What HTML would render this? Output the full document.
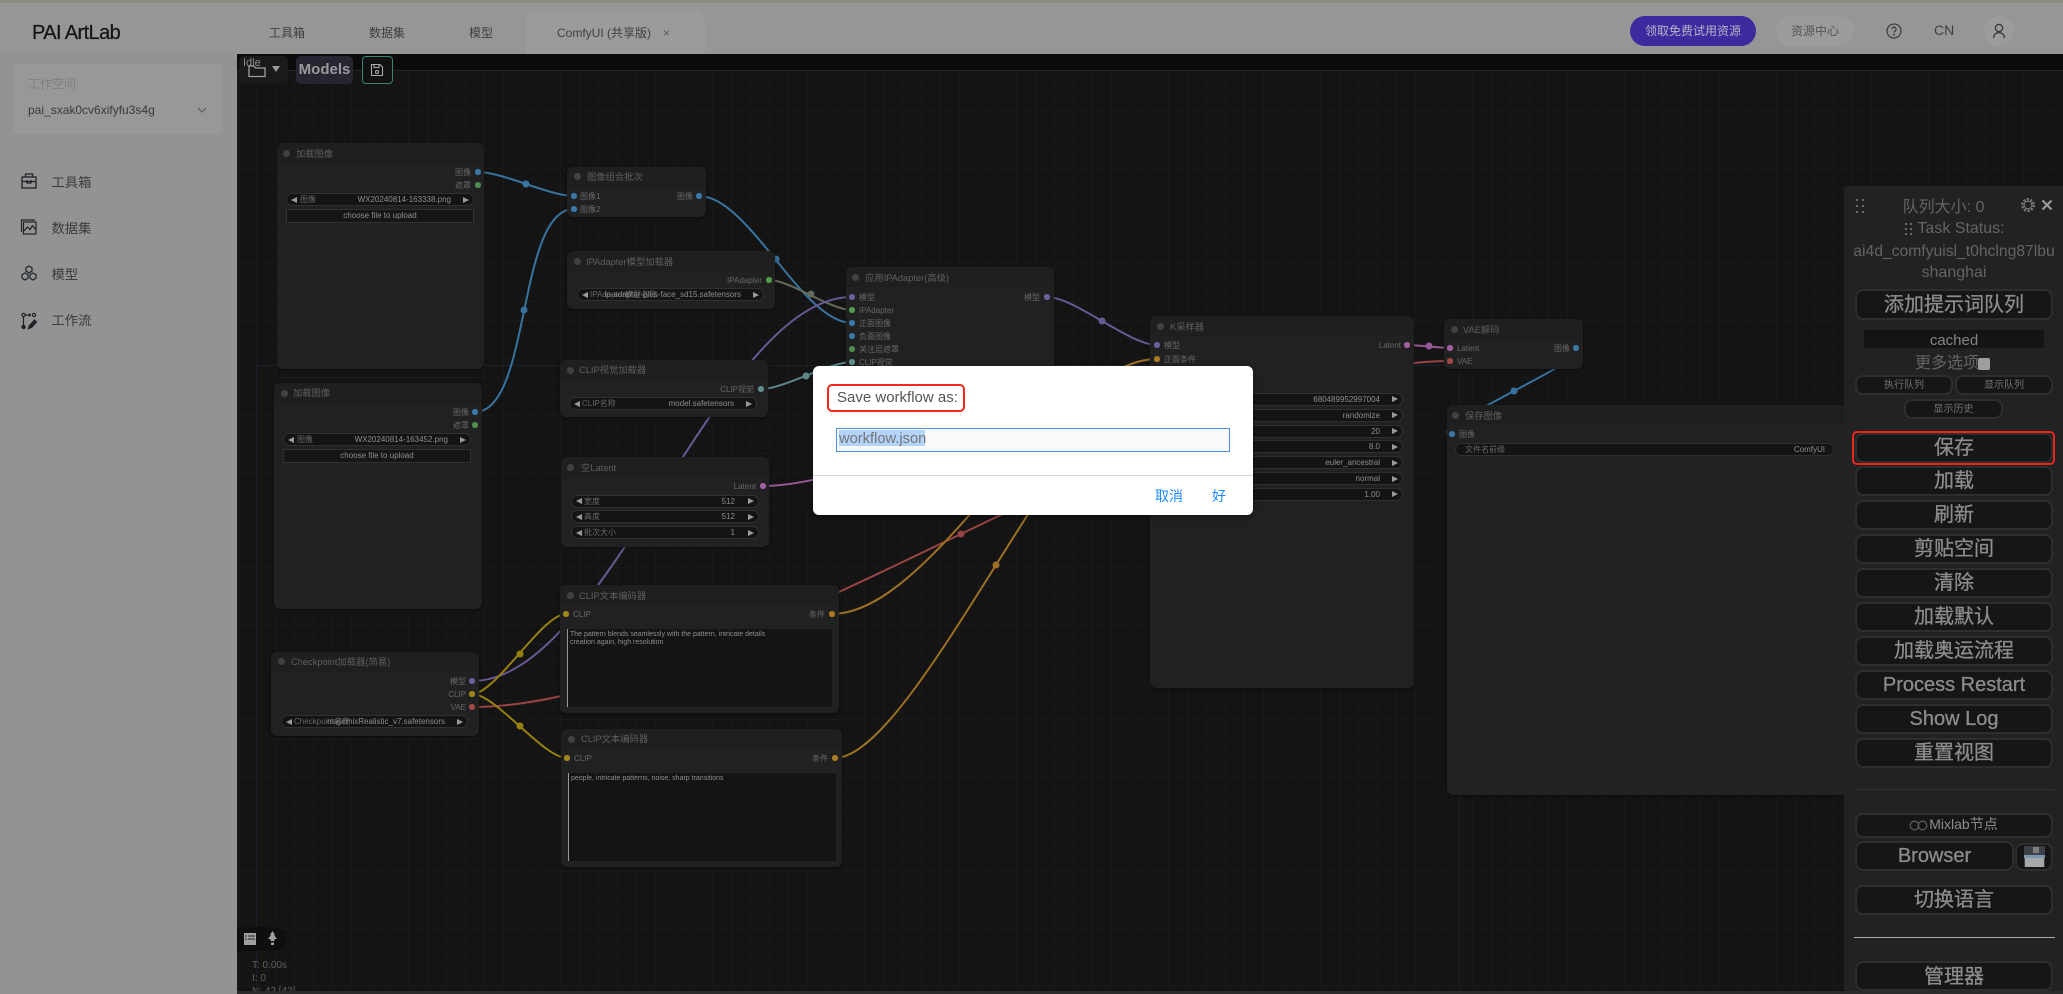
<!DOCTYPE html>
<html lang="zh">
<head>
<meta charset="utf-8">
<title>PAI ArtLab</title>
<style>
html,body{margin:0;padding:0;width:2063px;height:994px;overflow:hidden;background:#2a2a2a;font-family:"Liberation Sans","Noto Sans CJK SC",sans-serif}
.a{position:absolute}
.l{position:absolute;white-space:nowrap;line-height:14px;margin-top:-6.5px;font-size:8px;color:#676767}
.r{transform:translateX(-100%)}
.c{transform:translateX(-50%)}
.v{color:#8e8e8e}
.ti{font-size:9.3px;color:#5f5f5f;margin-top:-7.5px}
.n{position:absolute;background:#212121;border-radius:6px;box-shadow:0 1px 3px rgba(0,0,0,.5);overflow:hidden}
.n i{position:absolute;left:0;right:0;top:0;height:20px;background:#1f1f1f;display:block}
.d{position:absolute;width:5.5px;height:5.5px;border-radius:50%;margin:-2.75px 0 0 -2.75px}
.td{position:absolute;width:7px;height:7px;border-radius:50%;margin:-3.5px 0 0 -3.5px;background:#414141}
.w{position:absolute;height:13px;box-sizing:border-box;background:#141414;border:1px solid #303030;border-radius:7px}
.w:before{content:"";position:absolute;left:4px;top:2.5px;border-style:solid;border-width:3.5px 6px 3.5px 0;border-color:transparent #9a9a9a transparent transparent}
.w:after{content:"";position:absolute;right:4px;top:2.5px;border-style:solid;border-width:3.5px 0 3.5px 6px;border-color:transparent transparent transparent #9a9a9a}
.na:before,.na:after{display:none}
.f{position:absolute;height:14px;box-sizing:border-box;background:#161616;border:1px solid #303030;font-size:8px;line-height:12px;text-align:center;color:#8e8e8e}
.ta{position:absolute;background:#141414;border-left:1px solid #9a9a9a;box-sizing:border-box;font-size:7px;line-height:8px;color:#8e8e8e;padding:2px 2px;white-space:pre}
.b{position:absolute;left:1855px;width:198px;height:30px;box-sizing:border-box;border:2px solid #2e2e2e;border-radius:8px;background:#161616;color:#8c8c8c;font-size:20px;text-align:center;line-height:27px;white-space:nowrap;-webkit-text-stroke:.3px #8c8c8c}
.s{position:absolute;height:20px;box-sizing:border-box;border:2px solid #2e2e2e;border-radius:8px;background:#161616;color:#737373;font-size:10px;text-align:center;line-height:18px}
.p{position:absolute;left:1949px;transform:translateX(-50%);white-space:nowrap;font-size:16px;line-height:20px;margin-top:-9px;color:#646464}
.nav{position:absolute;left:51.5px;font-size:13.3px;line-height:18px;margin-top:-9px;color:#3c3c3c;white-space:nowrap}
.tab{position:absolute;font-size:12px;line-height:16px;top:25px;color:#3f3f3f;white-space:nowrap}
</style>
</head>
<body>
<!-- top strip & header -->
<div class="a" style="left:0;top:0;width:2063px;height:54px;background:#969696"></div>
<div class="a" style="left:0;top:0;width:2063px;height:3px;background:#8f8d7e"></div>
<div class="a" style="left:0;top:54px;width:237px;height:940px;background:#939393"></div>
<div class="a" style="left:526px;top:11px;width:179px;height:43px;background:#9b9b9b;border-radius:10px 10px 0 0"></div>

<div class="a" style="left:32px;top:21px;font-size:20px;line-height:24px;color:#151515;letter-spacing:-.6px;white-space:nowrap;-webkit-text-stroke:.25px #151515">PAI ArtLab</div>
<div class="tab" style="left:269px">工具箱</div>
<div class="tab" style="left:369px">数据集</div>
<div class="tab" style="left:469px">模型</div>
<div class="tab" style="left:557px">ComfyUI (共享版)</div>
<div class="tab" style="left:663px;color:#5a5a5a">×</div>

<div class="a" style="left:1630px;top:16px;width:126px;height:30px;border-radius:15px;background:#3c2a9e;color:#b5b5c5;font-size:12px;line-height:30px;text-align:center">领取免费试用资源</div>
<div class="a" style="left:1776px;top:16px;width:78px;height:30px;border-radius:15px;background:#9c9c9c;color:#555;font-size:12px;line-height:30px;text-align:center">资源中心</div>
<svg class="a" style="left:1885px;top:22px" width="18" height="18" viewBox="0 0 18 18" fill="none" stroke="#333" stroke-width="1.1"><circle cx="9" cy="9" r="7"/><path d="M6.9 7.2a2.1 2.1 0 1 1 3.2 1.8c-.7.4-1.1.8-1.1 1.6"/><circle cx="9" cy="12.6" r=".4" fill="#333"/></svg>
<div class="a" style="left:1934px;top:22px;font-size:14px;line-height:16px;color:#3f3f3f">CN</div>
<div class="a" style="left:1984px;top:16px;width:30px;height:30px;border-radius:50%;background:#9c9c9c"></div>
<svg class="a" style="left:1990px;top:22px" width="18" height="18" viewBox="0 0 18 18" fill="none" stroke="#333" stroke-width="1.2"><circle cx="9" cy="6" r="3.6"/><path d="M3.6 16c0-3.2 2.2-5.4 5.4-5.4s5.4 2.2 5.4 5.4"/></svg>

<!-- sidebar -->
<div class="a" style="left:13px;top:64px;width:209px;height:70px;background:#989898;border-radius:4px"></div>
<div class="a" style="left:28px;top:76px;font-size:12px;line-height:16px;color:#7f7f7f">工作空间</div>
<div class="a" style="left:28px;top:102px;font-size:12px;line-height:16px;color:#3a3a3a;white-space:nowrap">pai_sxak0cv6xifyfu3s4g</div>
<svg class="a" style="left:197px;top:105px" width="10" height="10" viewBox="0 0 10 10" fill="none" stroke="#555" stroke-width="1"><path d="M1 3l4 4 4-4"/></svg>

<svg class="a" style="left:20px;top:172px" width="18" height="18" viewBox="0 0 18 18" fill="none" stroke="#1f2329" stroke-width="1.3"><rect x="2" y="5" width="14" height="11"/><path d="M2 9.5h14M5.5 5V2h7v3M7 8v3h4V8"/></svg>
<svg class="a" style="left:20px;top:218px" width="18" height="18" viewBox="0 0 18 18" fill="none" stroke="#1f2329" stroke-width="1.2"><path d="M1.5 14V2H15"/><rect x="3.5" y="4" width="12.5" height="12"/><path d="M4 13l3.5-4 2.500 2.500 2.500-4 3 4"/></svg>
<svg class="a" style="left:20px;top:264px" width="18" height="18" viewBox="0 0 18 18" fill="none" stroke="#1f2329" stroke-width="1.200"><path d="M9 2l3 1.700v3.500l-3 1.700-3-1.700V3.700zM5 9l3 1.700v3.500L5 16l-3-1.800v-3.500zM13 9l3 1.700v3.500L13 16l-3-1.800v-3.500z"/></svg>
<svg class="a" style="left:20px;top:312px" width="18" height="18" viewBox="0 0 18 18" fill="none" stroke="#1f2329" stroke-width="1.200"><circle cx="3.500" cy="3" r="1.600"/><circle cx="3.500" cy="15" r="1.600" fill="#1f2329"/><circle cx="14" cy="3" r="1.600"/><path d="M3.500 4.600v9M5.500 3h5M9 1.500l1.500 1.500L9 4.500"/><path d="M8.500 16.500l1-3 5-5.500 2 2-5 5.500z" fill="#1f2329"/></svg>
<div class="nav" style="top:183px">工具箱</div>
<div class="nav" style="top:229px">数据集</div>
<div class="nav" style="top:275px">模型</div>
<div class="nav" style="top:321px">工作流</div>

<!-- canvas -->
<div class="a" style="left:237px;top:54px;width:1826px;height:937px;background-color:#141414;background-image:linear-gradient(#191919 1px,transparent 1px),linear-gradient(90deg,#191919 1px,transparent 1px);background-size:19px 19px"></div>
<div class="a" style="left:237px;top:54px;width:1826px;height:16px;background:#0b0b0b;border-bottom:1px solid #262626"></div>
<div class="a" style="left:256px;top:365px;width:1204px;height:626px;box-sizing:border-box;border:1px solid #16222e;border-bottom:0"></div>

<svg class="a" style="left:0;top:0" width="2063" height="994" fill="none" stroke-width="2">
<g stroke="#38739f">
<path d="M478 172C503 172 549 196 574 196"/>
<path d="M475 412C531 412 517 209 574 209"/>
<path d="M699 196C749 196 802 323 852 323"/>
<path d="M1576 348C1614 348 1414 434 1452 434"/>
</g>
<path d="M769 280C790 280 830 310 852 310" stroke="#636b5a"/>
<path d="M761 389C784 389 829 362 852 362" stroke="#5a8788"/>
<path d="M472 681C607 681 718 297 852 297" stroke="#685994"/>
<path d="M1047 297C1075 297 1129 345 1157 345" stroke="#685994"/>
<path d="M763 486C861 486 1058 385 1157 385" stroke="#965896"/>
<path d="M1407 345C1418 345 1440 348 1450 348" stroke="#965896"/>
<path d="M472 707C731 707 1191 361 1450 361" stroke="#984444"/>
<path d="M472 694C496 694 542 614 566 614" stroke="#98800f"/>
<path d="M472 694C496 694 543 758 567 758" stroke="#98800f"/>
<path d="M832 614C935 614 1054 359 1157 359" stroke="#9c7024"/>
<path d="M835 758C915 758 1077 372 1157 372" stroke="#9c7024"/>
<g stroke="none">
<circle cx="526" cy="184" r="3.500" fill="#38739f"/><circle cx="524" cy="310" r="3.500" fill="#38739f"/><circle cx="776" cy="259" r="3.500" fill="#38739f"/><circle cx="1514" cy="391" r="3.500" fill="#38739f"/>
<circle cx="811" cy="294" r="3.500" fill="#636b5a"/><circle cx="806" cy="376" r="3.500" fill="#5a8788"/><circle cx="1102" cy="321" r="3.500" fill="#685994"/><circle cx="1429" cy="346" r="3.500" fill="#965896"/><circle cx="961" cy="534" r="3.500" fill="#984444"/><circle cx="520" cy="654" r="3.500" fill="#98800f"/><circle cx="520" cy="726" r="3.500" fill="#98800f"/><circle cx="996" cy="565" r="3.500" fill="#9c7024"/>
</g>
</svg>

<!-- top toolbar -->
<div class="a" style="left:239px;top:56px;width:49px;height:28px;background:#1a1a1a;border-radius:5px"></div>
<svg class="a" style="left:248px;top:62px" width="20" height="17" viewBox="0 0 20 17" fill="none" stroke="#a0a0a0" stroke-width="1.300"><path d="M1 14.500V4h5l1.500 2h9.500v8.500z"/></svg>
<div class="a" style="left:272px;top:66px;width:0;height:0;border-style:solid;border-width:6px 4px 0 4px;border-color:#9a9a9a transparent transparent"></div>
<div class="a" style="left:243px;top:56px;font-size:11px;line-height:14px;color:#8c8c8c">Idle</div>
<div class="a" style="left:296px;top:56px;width:57px;height:28px;background:#262633;border-radius:5px;color:#9a9a9a;font-size:15px;font-weight:bold;line-height:28px;text-align:center">Models</div>
<div class="a" style="left:362px;top:56px;width:31px;height:28px;box-sizing:border-box;background:#111;border:1px solid #3a8278;border-radius:4px"></div>
<svg class="a" style="left:370px;top:63px" width="14" height="14" viewBox="0 0 14 14" fill="none" stroke="#aaa" stroke-width="1.100"><path d="M1.500 1.500h8.500l2.500 2.500v8.500h-11zM4 1.500v3h5v-3"/><circle cx="7" cy="9" r="1.500"/></svg>

<!-- Load image 1 -->
<div class="n" style="left:277px;top:143px;width:207px;height:226px"><i></i></div>
<div class="td" style="left:286px;top:153px"></div><div class="l ti" style="left:296px;top:154px">加载图像</div>
<div class="l r" style="left:471px;top:172px">图像</div><div class="d" style="left:478px;top:172px;background:#3a7aa8"></div>
<div class="l r" style="left:471px;top:185px">遮罩</div><div class="d" style="left:478px;top:185px;background:#4f8c4f"></div>
<div class="w" style="left:286px;top:193px;width:188px"></div><div class="l" style="left:300px;top:199.500px">图像</div><div class="l r v" style="left:451px;top:199.500px">WX20240814-163338.png</div>
<div class="f" style="left:286px;top:208.500px;width:188px">choose file to upload</div>

<!-- Load image 2 -->
<div class="n" style="left:274px;top:383px;width:208px;height:226px"><i></i></div>
<div class="td" style="left:284px;top:393px"></div><div class="l ti" style="left:293px;top:393px">加载图像</div>
<div class="l r" style="left:469px;top:412px">图像</div><div class="d" style="left:475px;top:412px;background:#3a7aa8"></div>
<div class="l r" style="left:469px;top:425px">遮罩</div><div class="d" style="left:475px;top:425px;background:#4f8c4f"></div>
<div class="w" style="left:283px;top:433px;width:188px"></div><div class="l" style="left:297px;top:439.500px">图像</div><div class="l r v" style="left:448px;top:439.500px">WX20240814-163452.png</div>
<div class="f" style="left:283px;top:448.500px;width:188px">choose file to upload</div>

<!-- Batch -->
<div class="n" style="left:567px;top:167px;width:139px;height:50px"><i></i></div>
<div class="td" style="left:577px;top:176px"></div><div class="l ti" style="left:587px;top:177px">图像组合批次</div>
<div class="d" style="left:574px;top:196px;background:#3a7aa8"></div><div class="l" style="left:580px;top:196px">图像1</div>
<div class="d" style="left:574px;top:209px;background:#3a7aa8"></div><div class="l" style="left:580px;top:209.500px">图像2</div>
<div class="l r" style="left:693px;top:196px">图像</div><div class="d" style="left:699px;top:196px;background:#3a7aa8"></div>

<!-- IPAdapter loader -->
<div class="n" style="left:567px;top:251px;width:208px;height:58px"><i></i></div>
<div class="td" style="left:577px;top:261px"></div><div class="l ti" style="left:586px;top:262px">IPAdapter模型加载器</div>
<div class="l r" style="left:762px;top:280px">IPAdapter</div><div class="d" style="left:769px;top:280px;background:#4f9c4f"></div>
<div class="w" style="left:577px;top:288px;width:187px"></div><div class="l" style="left:590px;top:294.500px">IPAdapter模型名称</div><div class="l r v" style="left:741px;top:294.500px">ip-adapter-plus-face_sd15.safetensors</div>

<!-- CLIP vision -->
<div class="n" style="left:560px;top:360px;width:208px;height:57px"><i></i></div>
<div class="td" style="left:570px;top:370px"></div><div class="l ti" style="left:579px;top:370px">CLIP视觉加载器</div>
<div class="l r" style="left:754px;top:389px">CLIP视觉</div><div class="d" style="left:761px;top:389px;background:#5f8f90"></div>
<div class="w" style="left:569px;top:397px;width:188px"></div><div class="l" style="left:582px;top:403px">CLIP名称</div><div class="l r v" style="left:734px;top:403px">model.safetensors</div>

<!-- Empty latent -->
<div class="n" style="left:561px;top:457px;width:208px;height:90px"><i></i></div>
<div class="td" style="left:570px;top:467px"></div><div class="l ti" style="left:581px;top:468px">空Latent</div>
<div class="l r" style="left:756px;top:486px">Latent</div><div class="d" style="left:763px;top:486px;background:#a060a0"></div>
<div class="w" style="left:571px;top:494.500px;width:188px"></div><div class="l" style="left:584px;top:501px">宽度</div><div class="l r v" style="left:735px;top:501px">512</div>
<div class="w" style="left:571px;top:510px;width:188px"></div><div class="l" style="left:584px;top:516.500px">高度</div><div class="l r v" style="left:735px;top:516.500px">512</div>
<div class="w" style="left:571px;top:526px;width:188px"></div><div class="l" style="left:584px;top:532.500px">批次大小</div><div class="l r v" style="left:735px;top:532.500px">1</div>

<!-- CLIP text 1 -->
<div class="n" style="left:560px;top:585px;width:279px;height:128px"><i></i></div>
<div class="td" style="left:570px;top:595px"></div><div class="l ti" style="left:579px;top:596px">CLIP文本编码器</div>
<div class="d" style="left:566px;top:614px;background:#a3861a"></div><div class="l" style="left:573px;top:614.500px">CLIP</div>
<div class="l r" style="left:825px;top:614.500px">条件</div><div class="d" style="left:832px;top:614px;background:#ad7a24"></div>
<div class="ta" style="left:567px;top:629px;width:265px;height:78px">The pattern blends seamlessly with the pattern, intricate details
creation again, high resolution</div>

<!-- CLIP text 2 -->
<div class="n" style="left:561px;top:729px;width:281px;height:138px"><i></i></div>
<div class="td" style="left:571px;top:739px"></div><div class="l ti" style="left:581px;top:739px">CLIP文本编码器</div>
<div class="d" style="left:567px;top:758px;background:#a3861a"></div><div class="l" style="left:574px;top:758px">CLIP</div>
<div class="l r" style="left:828px;top:758px">条件</div><div class="d" style="left:835px;top:758px;background:#ad7a24"></div>
<div class="ta" style="left:568px;top:773px;width:268px;height:88px">people, intricate patterns, noise, sharp transitions</div>

<!-- Checkpoint -->
<div class="n" style="left:271px;top:652px;width:208px;height:84px"><i></i></div>
<div class="td" style="left:281px;top:661px"></div><div class="l ti" style="left:291px;top:662px">Checkpoint加载器(简易)</div>
<div class="l r" style="left:466px;top:681px">模型</div><div class="d" style="left:472px;top:681px;background:#6f5f9c"></div>
<div class="l r" style="left:466px;top:694px">CLIP</div><div class="d" style="left:472px;top:694px;background:#a3861a"></div>
<div class="l r" style="left:466px;top:707.500px">VAE</div><div class="d" style="left:472px;top:707px;background:#a04848"></div>
<div class="w" style="left:281px;top:715px;width:187px"></div><div class="l" style="left:294px;top:721.500px">Checkpoint名称</div><div class="l r v" style="left:445px;top:721.500px">majicmixRealistic_v7.safetensors</div>

<!-- Apply IPAdapter -->
<div class="n" style="left:846px;top:267px;width:208px;height:233px"><i></i></div>
<div class="td" style="left:855px;top:277px"></div><div class="l ti" style="left:865px;top:278px">应用IPAdapter(高级)</div>
<div class="d" style="left:852px;top:297px;background:#6f5f9c"></div><div class="l" style="left:859px;top:297px">模型</div>
<div class="d" style="left:852px;top:310px;background:#4f9c4f"></div><div class="l" style="left:859px;top:310px">IPAdapter</div>
<div class="d" style="left:852px;top:323px;background:#3a7aa8"></div><div class="l" style="left:859px;top:323.500px">正面图像</div>
<div class="d" style="left:852px;top:336px;background:#3a7aa8"></div><div class="l" style="left:859px;top:336.500px">负面图像</div>
<div class="d" style="left:852px;top:349px;background:#4f8c4f"></div><div class="l" style="left:859px;top:349.500px">关注层遮罩</div>
<div class="d" style="left:852px;top:362px;background:#5f8f90"></div><div class="l" style="left:859px;top:362.500px">CLIP视觉</div>
<div class="l r" style="left:1040px;top:297px">模型</div><div class="d" style="left:1047px;top:297px;background:#6f5f9c"></div>

<!-- KSampler -->
<div class="n" style="left:1150px;top:316px;width:264px;height:372px"><i></i></div>
<div class="td" style="left:1160px;top:326px"></div><div class="l ti" style="left:1170px;top:327px">K采样器</div>
<div class="d" style="left:1157px;top:345px;background:#6f5f9c"></div><div class="l" style="left:1164px;top:345.500px">模型</div>
<div class="d" style="left:1157px;top:359px;background:#ad7a24"></div><div class="l" style="left:1164px;top:359px">正面条件</div>
<div class="l r" style="left:1401px;top:345.500px">Latent</div><div class="d" style="left:1407px;top:345px;background:#a060a0"></div>
<div class="w" style="left:1160px;top:392.500px;width:243px"></div><div class="l r v" style="left:1380px;top:399px">680489952997004</div>
<div class="w" style="left:1160px;top:408.500px;width:243px"></div><div class="l r v" style="left:1380px;top:415px">randomize</div>
<div class="w" style="left:1160px;top:424.500px;width:243px"></div><div class="l r v" style="left:1380px;top:431px">20</div>
<div class="w" style="left:1160px;top:440px;width:243px"></div><div class="l r v" style="left:1380px;top:446.500px">8.0</div>
<div class="w" style="left:1160px;top:456px;width:243px"></div><div class="l r v" style="left:1380px;top:462.500px">euler_ancestral</div>
<div class="w" style="left:1160px;top:472px;width:243px"></div><div class="l r v" style="left:1380px;top:478.500px">normal</div>
<div class="w" style="left:1160px;top:487.500px;width:243px"></div><div class="l r v" style="left:1380px;top:494px">1.00</div>

<!-- VAE decode -->
<div class="n" style="left:1444px;top:319px;width:139px;height:50px"><i></i></div>
<div class="td" style="left:1454px;top:329px"></div><div class="l ti" style="left:1463px;top:330px">VAE解码</div>
<div class="d" style="left:1450px;top:348px;background:#a060a0"></div><div class="l" style="left:1457px;top:348.500px">Latent</div>
<div class="d" style="left:1450px;top:361px;background:#a04848"></div><div class="l" style="left:1457px;top:361.500px">VAE</div>
<div class="l r" style="left:1570px;top:348.500px">图像</div><div class="d" style="left:1576px;top:348px;background:#3a7aa8"></div>

<!-- Save image -->
<div class="n" style="left:1447px;top:405px;width:410px;height:390px"><i></i></div>
<div class="td" style="left:1455px;top:415px"></div><div class="l ti" style="left:1465px;top:416px">保存图像</div>
<div class="d" style="left:1452px;top:434px;background:#3a7aa8"></div><div class="l" style="left:1459px;top:434.500px">图像</div>
<div class="w na" style="left:1455px;top:442.500px;width:379px"></div><div class="l" style="left:1465px;top:449px">文件名前缀</div><div class="l r v" style="left:1825px;top:449px">ComfyUI</div>

<!-- bottom-left tools -->
<div class="a" style="left:237px;top:927px;width:49px;height:24px;background:#0e0e0e;border-radius:0 12px 12px 0"></div>
<svg class="a" style="left:244px;top:933px" width="12" height="12" viewBox="0 0 12 12"><rect width="12" height="12" fill="#a0a0a0"/><path d="M1 3h2M4 3h7M1 6h2M4 6h7" stroke="#222" stroke-width="1"/></svg>
<svg class="a" style="left:267px;top:931px" width="11" height="15" viewBox="0 0 11 15"><path d="M5.500 0L8 4h-1l3 4H7.500v2h-4V8H1l3-4H3z" fill="#a0a0a0"/><rect x="4" y="11.500" width="3" height="2.500" fill="#a0a0a0"/></svg>
<div class="a" style="left:252px;top:959px;width:60px;height:32px;overflow:hidden;font-size:10px;line-height:13px;color:#5f5f5f;white-space:nowrap">T: 0.00s<br>I: 0<br>N: 42 [42]</div>

<!-- right panel -->
<div class="a" style="left:1844px;top:186px;width:219px;height:805px;background:#222;border-radius:4px 0 0 0"></div>
<svg class="a" style="left:1855px;top:198px" width="10" height="16" viewBox="0 0 10 16" fill="#6a6a6a"><rect x="1" y="1" width="2" height="2"/><rect x="7" y="1" width="2" height="2"/><rect x="1" y="7" width="2" height="2"/><rect x="7" y="7" width="2" height="2"/><rect x="1" y="13" width="2" height="2"/><rect x="7" y="13" width="2" height="2"/></svg>
<div class="p" style="left:1943.500px;top:207px">队列大小: 0</div>
<svg class="a" style="left:2020px;top:197px" width="16" height="16" viewBox="0 0 16 16" fill="none" stroke="#777"><circle cx="8" cy="8" r="5.500" stroke-width="3" stroke-dasharray="2 1.500"/><circle cx="8" cy="8" r="3.800" stroke-width="1"/></svg>
<svg class="a" style="left:2041px;top:199px" width="12" height="12" viewBox="0 0 12 12" stroke="#999" stroke-width="2.200"><path d="M1.500 1.500l9 9M10.500 1.500l-9 9"/></svg>
<svg class="a" style="left:1904px;top:222px" width="10" height="14" viewBox="0 0 10 14" fill="#6a6a6a"><rect x="1" y="1" width="2" height="2"/><rect x="6" y="1" width="2" height="2"/><rect x="1" y="6" width="2" height="2"/><rect x="6" y="6" width="2" height="2"/><rect x="1" y="11" width="2" height="2"/><rect x="6" y="11" width="2" height="2"/></svg>
<div class="p" style="left:1961px;top:228px">Task Status:</div>
<div class="p" style="left:1954px;top:251px;font-size:15.7px">ai4d_comfyuisl_t0hclng87lbu</div>
<div class="p" style="left:1954px;top:272px">shanghai</div>
<div class="b" style="top:289px;height:31px;line-height:28px">添加提示词队列</div>
<div class="a" style="left:1864px;top:330px;width:180px;height:18px;background:#141414;color:#858585;font-size:15px;line-height:22px;text-align:center;overflow:hidden">cached</div>
<div class="p" style="left:1947px;top:363px">更多选项</div>
<div class="a" style="left:1978px;top:357.500px;width:12px;height:12px;background:#9e9e9e;border-radius:2px"></div>
<div class="s" style="left:1855px;top:375px;width:98px">执行队列</div>
<div class="s" style="left:1955px;top:375px;width:98px">显示队列</div>
<div class="s" style="left:1904px;top:398.500px;width:99px">显示历史</div>

<div class="b" style="top:432.500px">保存</div>
<div class="a" style="left:1852px;top:431px;width:203px;height:34px;box-sizing:border-box;border:2.500px solid #e8261a;border-radius:5px"></div>
<div class="b" style="top:466px">加载</div>
<div class="b" style="top:500px">刷新</div>
<div class="b" style="top:534px">剪贴空间</div>
<div class="b" style="top:568px">清除</div>
<div class="b" style="top:602px">加载默认</div>
<div class="b" style="top:636px">加载奥运流程</div>
<div class="b" style="top:670px">Process Restart</div>
<div class="b" style="top:704px">Show Log</div>
<div class="b" style="top:738px">重置视图</div>
<div class="a" style="left:1854px;top:789px;width:200px;height:1px;background:#333"></div>
<div class="b" style="top:813px;height:25px;font-size:14px;line-height:19px;padding-left:19px;-webkit-text-stroke:0">Mixlab节点</div>
<svg class="a" style="left:1909px;top:819.500px" width="19" height="11" viewBox="0 0 19 11" fill="none" stroke="#5a5a5a" stroke-width="1.300"><circle cx="5.500" cy="5.500" r="4.300"/><circle cx="13.500" cy="5.500" r="4.300"/></svg>
<div class="b" style="top:841px;width:159px;line-height:27px;padding-right:0">Browser</div>
<div class="a" style="left:2015px;top:843px;width:38px;height:28px;box-sizing:border-box;border:2px solid #2e2e2e;border-radius:8px;background:#161616"></div>
<svg class="a" style="left:2024px;top:846px" width="21" height="21" viewBox="0 0 21 21"><rect width="21" height="21" fill="#3d4046"/><rect x="9" y="1" width="6" height="6" fill="#7d7d7d"/><rect x="0" y="9" width="21" height="3" fill="#7796b2"/><rect x="1" y="12" width="19" height="9" fill="#a8a8a8"/></svg>
<div class="b" style="top:885px">切换语言</div>
<div class="a" style="left:1854px;top:937px;width:201px;height:1px;background:#a8a8a8"></div>
<div class="b" style="top:961px;line-height:28px">管理器</div>

<!-- modal -->
<div class="a" style="left:813px;top:366px;width:440px;height:149px;background:#fff;border-radius:6px;box-shadow:0 2px 6px rgba(0,0,0,.35)"></div>
<div class="a" style="left:827px;top:384px;width:138px;height:28px;box-sizing:border-box;border:2.500px solid #f0281c;border-radius:5px"></div>
<div class="a" style="left:837px;top:388.500px;font-size:15px;line-height:18px;color:#555;white-space:nowrap">Save workflow as:</div>
<div class="a" style="left:836px;top:428px;width:394px;height:24px;box-sizing:border-box;border:1px solid #4a8fe0;background:#fafafa"></div>
<div class="a" style="left:839px;top:430px;width:86px;height:16px;background:#b3d4f8"></div>
<div class="a" style="left:839px;top:429.500px;font-size:14.700px;line-height:19px;color:#757575;white-space:nowrap">workflow.json</div>
<div class="a" style="left:813px;top:475px;width:440px;height:1px;background:#d6d6d6"></div>
<div class="a" style="left:1155px;top:487px;font-size:14px;line-height:18px;color:#1a8cff;white-space:nowrap">取消</div>
<div class="a" style="left:1212px;top:487px;font-size:14px;line-height:18px;color:#1a8cff">好</div>
</body>
</html>
